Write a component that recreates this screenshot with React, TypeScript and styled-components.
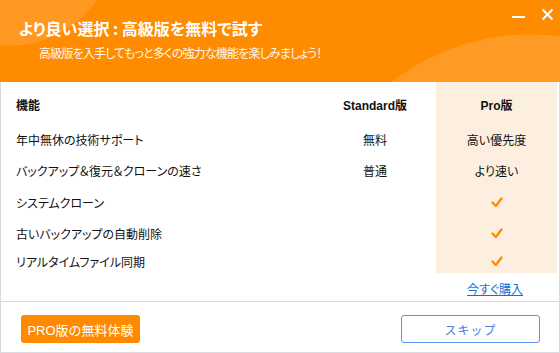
import styled, { createGlobalStyle } from 'styled-components';

const GlobalStyle = createGlobalStyle`
  html, body {
    margin: 0;
    padding: 0;
    background: #ffffff;
  }
  body {
    font-family: 'Liberation Sans', 'Noto Sans CJK JP', sans-serif;
    font-feature-settings: 'palt';
  }
  * {
    box-sizing: border-box;
  }
`;

const features = [
  { name: '年中無休の技術サポート', standard: '無料', pro: '高い優先度' },
  { name: 'バックアップ＆復元＆クローンの速さ', standard: '普通', pro: 'より速い' },
  { name: 'システムクローン', standard: '', pro: 'check' },
  { name: '古いバックアップの自動削除', standard: '', pro: 'check' },
  { name: 'リアルタイムファイル同期', standard: '', pro: 'check' },
];

const rowHeights = [31, 31, 32, 31, 24];

const Check = () => (
  <svg width='12' height='11' viewBox='0 0 12 11'>
    <polyline
      points='1.5,5.5 4.8,9 10.5,1.5'
      fill='none'
      stroke='#ff8a00'
      strokeWidth='2.3'
      strokeLinecap='round'
      strokeLinejoin='round'
    />
  </svg>
);

const App = () => {
  return (
    <Window>
      <GlobalStyle />
      <Header>
        <TitleBar>
          <Title>より良い選択 : 高級版を無料で試す</Title>
          <WindowControls>
            <ControlButton aria-label='minimize'>
              <svg width='14' height='14' viewBox='0 0 14 14'>
                <line x1='1' y1='10' x2='14' y2='10' stroke='#fff' strokeWidth='2' />
              </svg>
            </ControlButton>
            <ControlButton aria-label='close'>
              <svg width='13' height='13' viewBox='0 0 13 13'>
                <path d='M1.5 1.5 L11.5 11.5 M11.5 1.5 L1.5 11.5' stroke='#fff' strokeWidth='2' />
              </svg>
            </ControlButton>
          </WindowControls>
        </TitleBar>
        <Subtitle>高級版を入手してもっと多くの強力な機能を楽しみましょう！</Subtitle>
      </Header>

      <Body>
        <Table>
          <HeadCell $h={42}>機能</HeadCell>
          <HeadCell $h={42} $center>Standard版</HeadCell>
          <HeadCell $h={42} $center $pro>Pro版</HeadCell>
          {features.map((f, i) => (
            <Row key={f.name}>
              <Cell $h={rowHeights[i]}>{f.name}</Cell>
              <Cell $h={rowHeights[i]} $center>{f.standard}</Cell>
              <Cell $h={rowHeights[i]} $center $pro>
                {f.pro === 'check' ? <Check /> : f.pro}
              </Cell>
            </Row>
          ))}
        </Table>
        <LinkRow>
          <BuyLink href='#'>今すぐ購入</BuyLink>
        </LinkRow>
      </Body>

      <Footer>
        <TrialButton>PRO版の無料体験</TrialButton>
        <SkipButton>スキップ</SkipButton>
      </Footer>
    </Window>
  );
};

export default App;

const Window = styled.div`
  width: 560px;
  height: 353px;
  display: flex;
  flex-direction: column;
  background: #ffffff;
`;

const Header = styled.div`
  height: 83px;
  padding: 19px 0 0 19px;
  background:
    radial-gradient(circle at 10px -60px, #ff9922 0 105px, transparent 106px),
    radial-gradient(circle at 530px 260px, #ff9a24 0 225px, transparent 226px),
    #ff8c00;
  color: #ffffff;
`;

const TitleBar = styled.div`
  display: flex;
  align-items: flex-start;
  justify-content: space-between;
`;

const Title = styled.h1`
  margin: 0;
  font-size: 16px;
  line-height: 18px;
  font-weight: 700;
  font-family: 'Noto Sans CJK JP', sans-serif;
  color: #ffffff;
  white-space: pre;
`;

const WindowControls = styled.div`
  display: flex;
  gap: 15px;
  margin-top: -12px;
  padding-right: 6px;
`;

const ControlButton = styled.button`
  width: 14px;
  height: 14px;
  padding: 0;
  border: none;
  background: transparent;
  display: flex;
  align-items: center;
  justify-content: center;
  cursor: pointer;
`;

const Subtitle = styled.p`
  margin: 9px 0 0 20px;
  font-size: 12px;
  line-height: 14px;
  letter-spacing: -0.8px;
  font-family: 'Noto Sans CJK JP', sans-serif;
  color: #fff5ea;
`;

const Body = styled.div`
  flex: 1;
  display: flex;
  flex-direction: column;
  border-left: 1px solid #d7dce4;
  border-right: 1px solid #d7dce4;
  border-bottom: 1px solid #d7dce4;
  padding-right: 2px;
`;

const Table = styled.div`
  display: grid;
  grid-template-columns: 313px 122px 121px;
`;

const Row = styled.div`
  display: contents;
`;

const Cell = styled.div<{ $h: number; $center?: boolean; $pro?: boolean }>`
  height: ${(p) => p.$h}px;
  display: flex;
  align-items: center;
  justify-content: ${(p) => (p.$center ? 'center' : 'flex-start')};
  padding-left: ${(p) => (p.$center ? '0' : '15px')};
  background: ${(p) => (p.$pro ? '#fcefdf' : 'transparent')};
  font-size: 12px;
  color: #111111;
`;

const HeadCell = styled(Cell)`
  font-weight: 700;
  padding-top: 2px;
`;

const LinkRow = styled.div`
  height: 28px;
  display: flex;
  justify-content: flex-end;
  align-items: center;
  padding-right: 34px;
  padding-top: 2px;
`;

const BuyLink = styled.a`
  font-size: 12px;
  color: #1570d6;
  text-decoration: underline;
`;

const Footer = styled.div`
  height: 51px;
  display: flex;
  justify-content: space-between;
  align-items: flex-start;
  padding: 13px 19px 0 20px;
  border-left: 1px solid #d7dce4;
  border-right: 1px solid #d7dce4;
  border-bottom: 1px solid #d7dce4;
`;

const TrialButton = styled.button`
  width: 119px;
  height: 28px;
  border: none;
  border-radius: 3px;
  background: #ff8a00;
  color: #ffffff;
  font-size: 13px;
  font-family: 'Liberation Sans', 'Noto Sans CJK JP', sans-serif;
  cursor: pointer;
`;

const SkipButton = styled.button`
  width: 139px;
  height: 28px;
  border: 1px solid #5a92f0;
  border-radius: 3px;
  background: #ffffff;
  color: #4a7ddc;
  font-size: 12px;
  font-family: 'Noto Sans CJK JP', sans-serif;
  letter-spacing: 1px;
  cursor: pointer;
`;
